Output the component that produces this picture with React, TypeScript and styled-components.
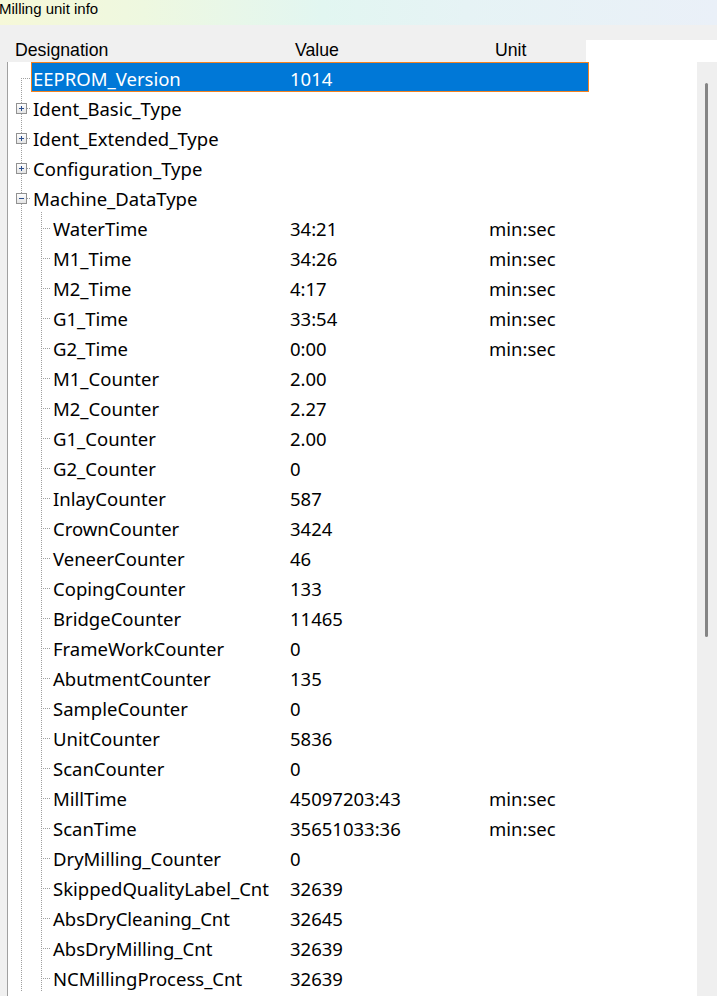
import { createGlobalStyle, styled } from 'styled-components';

type Kind = 'first' | 'plus' | 'minus' | 'leaf';

interface Item {
  name: string;
  value?: string;
  unit?: string;
  level: number;
  kind: Kind;
  selected?: boolean;
}

const GlobalStyle = createGlobalStyle`
  html, body {
    margin: 0;
    padding: 0;
    background: #f0f0f0;
    overflow: hidden;
  }
`;

const Window = styled.div`
  width: 717px;
  height: 996px;
  display: flex;
  flex-direction: column;
  background: #f0f0f0;
  font-family: 'Liberation Sans', Arial, sans-serif;
`;

const TitleBar = styled.div`
  height: 25px;
  display: flex;
  align-items: flex-start;
  background: linear-gradient(
    90deg,
    #f6f8d8 0%,
    #eef8e0 20%,
    #e2f6f1 45%,
    #e6f3f5 65%,
    #eaf0f8 100%
  );
`;

const Title = styled.span`
  margin: 1px 0 0 -1px;
  font-size: 15px;
  line-height: 15px;
  color: #000;
`;

const HeaderRow = styled.div`
  margin-top: 15px;
  height: 22px;
  display: flex;
`;

const HeaderCells = styled.div`
  width: 586px;
  display: flex;
  background: #f0f0f0;
`;

const HeaderCell = styled.div<{ $width: number; $pad: number }>`
  width: ${(p) => p.$width}px;
  padding-left: ${(p) => p.$pad}px;
  box-sizing: border-box;
  font-size: 17.7px;
  line-height: 21px;
  color: #000;
`;

const HeaderFiller = styled.div`
  flex: 1;
  background: #fff;
`;

const Body = styled.div`
  flex: 1;
  min-height: 0;
  display: flex;
`;

const Gutter = styled.div`
  width: 7px;
  background: #f0f0f0;
`;

const TreePanel = styled.div`
  width: 690px;
  box-sizing: border-box;
  border-left: 1px solid #a0a0a0;
  padding-left: 3px;
  background: #fff;
  overflow: hidden;
`;

const Row = styled.div`
  height: 30px;
  display: flex;
`;

const Indent = styled.svg`
  flex: none;
  width: 20px;
  height: 30px;
  display: block;
`;

const Content = styled.div<{ $level: number; $selected?: boolean }>`
  flex: none;
  width: ${(p) => 558 - p.$level * 20}px;
  height: 30px;
  box-sizing: border-box;
  display: flex;
  align-items: center;
  padding: 2px 0 0 1px;
  font-family: 'Noto Sans', 'Open Sans', sans-serif;
  font-size: 18.5px;
  color: ${(p) => (p.$selected ? '#fff' : '#000')};
  background: ${(p) => (p.$selected ? '#0078d7' : 'transparent')};
  border: 1px solid ${(p) => (p.$selected ? '#f5821f' : 'transparent')};
  white-space: nowrap;
`;

const Label = styled.span<{ $level: number }>`
  flex: none;
  width: ${(p) => 257 - p.$level * 20}px;
`;

const Value = styled.span`
  flex: none;
  width: 199px;
`;

const Unit = styled.span`
  flex: 1;
`;

const ScrollTrack = styled.div`
  width: 20px;
  padding-top: 21px;
  box-sizing: border-box;
  background: #efefef;
`;

const Thumb = styled.div`
  width: 3px;
  height: 554px;
  margin-left: 8px;
  border-radius: 2px;
  background: #858585;
`;

const LINE = '#a0a0a0';
const DOTS = '1 1';

const VLine = ({ from, to }: { from: number; to: number }) => (
  <line x1={10.5} y1={from} x2={10.5} y2={to} stroke={LINE} strokeDasharray={DOTS} />
);

const HLine = ({ from }: { from: number }) => (
  <line x1={from} y1={16.5} x2={20} y2={16.5} stroke={LINE} strokeDasharray={DOTS} />
);

const Expander = ({ open }: { open: boolean }) => (
  <g>
    <defs>
      <linearGradient id="exp-fill" x1="0" y1="0" x2="0" y2="1">
        <stop offset="0" stopColor="#ffffff" />
        <stop offset="1" stopColor="#e3e3e3" />
      </linearGradient>
    </defs>
    <rect x={5.5} y={11.5} width={10} height={10} fill="url(#exp-fill)" stroke="#919191" />
    <line x1={8} y1={16.5} x2={13} y2={16.5} stroke="#2d4f8e" />
    {!open && <line x1={10.5} y1={14} x2={10.5} y2={19} stroke="#2d4f8e" />}
  </g>
);

// one 20px column of tree lines
const TreeCell = ({ type }: { type: 'pipe' | 'first' | 'tee' | 'plus' | 'minus' }) => (
  <Indent viewBox="0 0 20 30">
    {type === 'pipe' && <VLine from={0} to={30} />}
    {type === 'first' && (
      <>
        <VLine from={16} to={30} />
        <HLine from={10} />
      </>
    )}
    {type === 'tee' && (
      <>
        <VLine from={0} to={30} />
        <HLine from={10} />
      </>
    )}
    {(type === 'plus' || type === 'minus') && (
      <>
        <VLine from={0} to={11} />
        <VLine from={22} to={30} />
        <HLine from={16} />
        <Expander open={type === 'minus'} />
      </>
    )}
  </Indent>
);

const MIN_SEC = 'min:sec';

const items: Item[] = [
  { name: 'EEPROM_Version', value: '1014', level: 0, kind: 'first', selected: true },
  { name: 'Ident_Basic_Type', level: 0, kind: 'plus' },
  { name: 'Ident_Extended_Type', level: 0, kind: 'plus' },
  { name: 'Configuration_Type', level: 0, kind: 'plus' },
  { name: 'Machine_DataType', level: 0, kind: 'minus' },
  { name: 'WaterTime', value: '34:21', unit: MIN_SEC, level: 1, kind: 'leaf' },
  { name: 'M1_Time', value: '34:26', unit: MIN_SEC, level: 1, kind: 'leaf' },
  { name: 'M2_Time', value: '4:17', unit: MIN_SEC, level: 1, kind: 'leaf' },
  { name: 'G1_Time', value: '33:54', unit: MIN_SEC, level: 1, kind: 'leaf' },
  { name: 'G2_Time', value: '0:00', unit: MIN_SEC, level: 1, kind: 'leaf' },
  { name: 'M1_Counter', value: '2.00', level: 1, kind: 'leaf' },
  { name: 'M2_Counter', value: '2.27', level: 1, kind: 'leaf' },
  { name: 'G1_Counter', value: '2.00', level: 1, kind: 'leaf' },
  { name: 'G2_Counter', value: '0', level: 1, kind: 'leaf' },
  { name: 'InlayCounter', value: '587', level: 1, kind: 'leaf' },
  { name: 'CrownCounter', value: '3424', level: 1, kind: 'leaf' },
  { name: 'VeneerCounter', value: '46', level: 1, kind: 'leaf' },
  { name: 'CopingCounter', value: '133', level: 1, kind: 'leaf' },
  { name: 'BridgeCounter', value: '11465', level: 1, kind: 'leaf' },
  { name: 'FrameWorkCounter', value: '0', level: 1, kind: 'leaf' },
  { name: 'AbutmentCounter', value: '135', level: 1, kind: 'leaf' },
  { name: 'SampleCounter', value: '0', level: 1, kind: 'leaf' },
  { name: 'UnitCounter', value: '5836', level: 1, kind: 'leaf' },
  { name: 'ScanCounter', value: '0', level: 1, kind: 'leaf' },
  { name: 'MillTime', value: '45097203:43', unit: MIN_SEC, level: 1, kind: 'leaf' },
  { name: 'ScanTime', value: '35651033:36', unit: MIN_SEC, level: 1, kind: 'leaf' },
  { name: 'DryMilling_Counter', value: '0', level: 1, kind: 'leaf' },
  { name: 'SkippedQualityLabel_Cnt', value: '32639', level: 1, kind: 'leaf' },
  { name: 'AbsDryCleaning_Cnt', value: '32645', level: 1, kind: 'leaf' },
  { name: 'AbsDryMilling_Cnt', value: '32639', level: 1, kind: 'leaf' },
  { name: 'NCMillingProcess_Cnt', value: '32639', level: 1, kind: 'leaf' },
];

const TreeRow = ({ item }: { item: Item }) => {
  const own = item.kind === 'leaf' ? 'tee' : item.kind;
  return (
    <Row>
      {item.level > 0 && <TreeCell type="pipe" />}
      <TreeCell type={own} />
      <Content $level={item.level} $selected={item.selected}>
        <Label $level={item.level}>{item.name}</Label>
        <Value>{item.value}</Value>
        <Unit>{item.unit}</Unit>
      </Content>
    </Row>
  );
};

const App = () => (
  <Window>
    <GlobalStyle />
    <TitleBar>
      <Title>Milling unit info</Title>
    </TitleBar>
    <HeaderRow>
      <HeaderCells>
        <HeaderCell $width={280} $pad={15}>Designation</HeaderCell>
        <HeaderCell $width={200} $pad={15}>Value</HeaderCell>
        <HeaderCell $width={106} $pad={15}>Unit</HeaderCell>
      </HeaderCells>
      <HeaderFiller />
    </HeaderRow>
    <Body>
      <Gutter />
      <TreePanel>
        {items.map((item) => (
          <TreeRow key={item.name} item={item} />
        ))}
      </TreePanel>
      <ScrollTrack>
        <Thumb />
      </ScrollTrack>
    </Body>
  </Window>
);

export default App;
